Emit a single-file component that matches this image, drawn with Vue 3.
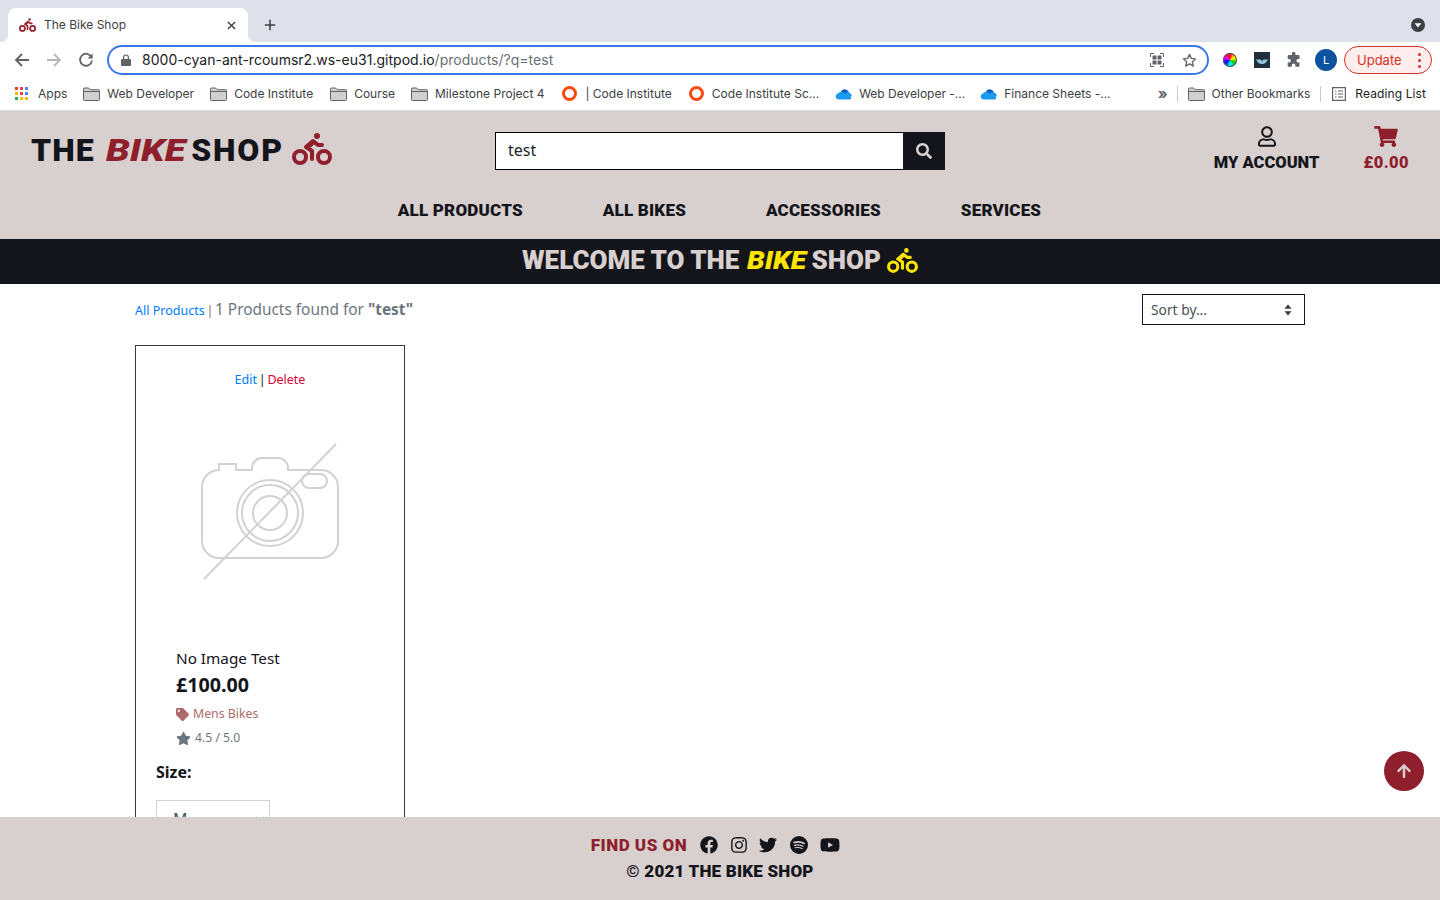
<script setup>
const bike = "M400 96a48 48 0 1 0-48-48 48 48 0 0 0 48 48zm-4 121a31.9 31.9 0 0 0 20 7h64a32 32 0 0 0 0-64h-52.78L356 103a31.94 31.94 0 0 0-40.81.68l-112 96a32 32 0 0 0 3.08 50.92L288 305.12V416a32 32 0 0 0 64 0V288a32 32 0 0 0-14.25-26.62l-41.36-27.57 58.25-49.92zm116 39a128 128 0 1 0 128 128 128 128 0 0 0-128-128zm0 192a64 64 0 1 1 64-64 64 64 0 0 1-64 64zM128 256a128 128 0 1 0 128 128 128 128 0 0 0-128-128zm0 192a64 64 0 1 1 64-64 64 64 0 0 1-64 64z"
const bookmarks = [
  { type: 'apps', label: 'Apps', cls: 'b-apps' },
  { type: 'folder', label: 'Web Developer', cls: 'b-web' },
  { type: 'folder', label: 'Code Institute', cls: 'b-ci' },
  { type: 'folder', label: 'Course', cls: 'b-course' },
  { type: 'folder', label: 'Milestone Project 4', cls: 'b-ms' },
  { type: 'ring', label: '| Code Institute', cls: 'b-ci2' },
  { type: 'ring', label: 'Code Institute Sc...', cls: 'b-sc' },
  { type: 'cloud', label: 'Web Developer -...', cls: 'b-wd' },
  { type: 'cloud', label: 'Finance Sheets -...', cls: 'b-fs' },
]
const navItems = ['ALL PRODUCTS', 'ALL BIKES', 'ACCESSORIES', 'SERVICES']
const appColors = ['#ea4335', '#ea4335', '#4285f4', '#fbbc04', '#ea4335', '#4285f4', '#34a853', '#fbbc04', '#fbbc04']
</script>

<template>
  <div class="screen">
    <div class="tabstrip">
      <div class="tab">
        <svg class="tab-ico" viewBox="0 0 640 512"><path :d="bike" /></svg>
        <span class="tab-title">The Bike Shop</span>
        <svg class="tab-x" viewBox="0 0 10 10"><path d="M1 1l8 8M9 1l-8 8" /></svg>
      </div>
      <svg class="tab-plus" viewBox="0 0 14 14"><path d="M7 1v12M1 7h12" /></svg>
      <div class="strip-spacer"></div>
      <div class="strip-menu"><svg viewBox="0 0 14 14"><circle cx="7" cy="7" r="7" fill="#3c4043" /><path d="M3.6 5.2h6.8L7 9.6z" fill="#fff" /></svg></div>
    </div>

    <div class="toolbar">
      <svg class="nav-ico first" viewBox="0 0 16 16"><path d="M15 8H2M8 2L2 8l6 6" stroke="#5f6368" /></svg>
      <svg class="nav-ico" viewBox="0 0 16 16"><path d="M1 8h13M8 2l6 6-6 6" stroke="#b4b7bb" /></svg>
      <svg class="nav-ico" viewBox="0 0 16 16"><path d="M13.4 5A6 6 0 1 0 14 8.500" stroke="#5f6368" /><path d="M14.600 1.500v5h-5z" fill="#5f6368" /></svg>
      <div class="omnibox">
        <svg class="lock" viewBox="0 0 10 12"><path d="M2 5V3.400a3 3 0 0 1 6 0V5h1a1 1 0 0 1 1 1v5a1 1 0 0 1-1 1H1a1 1 0 0 1-1-1V6a1 1 0 0 1 1-1zm1.200 0h3.600V3.400a1.800 1.800 0 0 0-3.600 0z" fill="#5f6368" /></svg>
        <span class="url"><span class="url-host">8000-cyan-ant-rcoumsr2.ws-eu31.gitpod.io</span>/products/?q=test</span>
        <svg class="qr" viewBox="0 0 14 14"><path d="M.5 4V.5H4M10 .5h3.500V4M13.500 10v3.500H10M4 13.500H.5V10" stroke="#5f6368" fill="none" /><rect x="2.500" y="2.500" width="4" height="4" rx=".6" fill="#5f6368" /><rect x="7.500" y="2.500" width="4" height="4" rx=".6" fill="#5f6368" /><rect x="2.500" y="7.500" width="4" height="4" rx=".6" fill="#5f6368" /><rect x="7.500" y="7.500" width="4" height="4" rx=".6" fill="#5f6368" /></svg>
        <svg class="star-o" viewBox="0 0 14 14"><path d="M7 1.300l1.700 3.700 4 .5-3 2.700.9 4L7 10.200l-3.600 2 .9-4-3-2.700 4-.5z" fill="none" stroke="#5f6368" stroke-width="1.200" stroke-linejoin="round" /></svg>
      </div>
      <div class="wheel"></div>
      <div class="ext-dark"><svg viewBox="0 0 16 16"><path d="M2 7c2 1 3 1 4 0 1 2 3 2 4 0 1 1 2 1 4 0-1 3-3 5-6 5S3 10 2 7z" fill="#8fc6d8" /></svg></div>
      <svg class="puzzle" viewBox="0 0 16 16"><path d="M6 1.500a1.700 1.700 0 0 1 3.400 0V3h3.100a1 1 0 0 1 1 1v3h-1.300a1.800 1.800 0 0 0 0 3.600h1.300v3.100a1 1 0 0 1-1 1H9.400v-1.300a1.800 1.800 0 0 0-3.600 0v1.300H2.700a1 1 0 0 1-1-1v-3.100H3a1.800 1.800 0 0 0 0-3.600H1.700V4a1 1 0 0 1 1-1H6z" fill="#5f6368" /></svg>
      <div class="avatar">L</div>
      <div class="update"><span>Update</span><i class="dots"><b></b><b></b><b></b></i></div>
    </div>

    <div class="bookmarks">
      <div v-for="b in bookmarks" :key="b.cls" class="bm" :class="b.cls">
        <span v-if="b.type === 'apps'" class="apps-grid"><i v-for="(c, i) in appColors" :key="i" :style="{ background: c }"></i></span>
        <svg v-else-if="b.type === 'folder'" class="folder" viewBox="0 0 17 14"><path d="M.5 2a1 1 0 0 1 1-1h4.200l1.500 1.700h8.300a1 1 0 0 1 1 1v8.800a1 1 0 0 1-1 1h-14a1 1 0 0 1-1-1z" fill="#d0d0d0" stroke="#5f6368" /><path d="M.5 4.500h16" stroke="#5f6368" /></svg>
        <span v-else-if="b.type === 'ring'" class="ring"></span>
        <svg v-else class="cloud" viewBox="0 0 17 12"><path d="M6 3.500a4.300 4.300 0 0 1 8 1.500 3 3 0 0 1 2.500 3.500H6z" fill="#0a5fc4" /><path d="M3.500 11.500a3 3 0 0 1-.6-5.900A4 4 0 0 1 10 6a2.500 2.500 0 0 1 5.500 2.500c1 1 .8 3-1 3z" fill="#1b9bef" /></svg>
        <span>{{ b.label }}</span>
      </div>
      <div class="bm-spacer"></div>
      <span class="chev">»</span>
      <i class="bm-sep sep-a"></i>
      <div class="bm b-other">
        <svg class="folder" viewBox="0 0 17 14"><path d="M.5 2a1 1 0 0 1 1-1h4.200l1.500 1.700h8.300a1 1 0 0 1 1 1v8.800a1 1 0 0 1-1 1h-14a1 1 0 0 1-1-1z" fill="#d0d0d0" stroke="#5f6368" /><path d="M.5 4.500h16" stroke="#5f6368" /></svg>
        <span>Other Bookmarks</span>
      </div>
      <i class="bm-sep sep-b"></i>
      <div class="bm b-read">
        <svg class="read" viewBox="0 0 14 14"><path d="M.6.6h12.800v12.800H.6z" fill="none" stroke="#5f6368" stroke-width="1.200" /><path d="M3 4h1.500M6 4h5M3 7h1.500M6 7h5M3 10h1.500M6 10h5" stroke="#5f6368" stroke-width="1.200" /></svg>
        <span class="read-t">Reading List</span>
      </div>
    </div>

    <header class="site-head">
      <div class="head-top">
        <div class="logo">
          <span class="word-the">THE</span>
          <em class="word-bike">BIKE</em>
          <span class="word-shop">SHOP</span>
          <svg class="logo-ico" viewBox="0 0 640 512"><path :d="bike" /></svg>
        </div>
        <div class="search">
          <div class="search-input">test</div>
          <div class="search-btn"><svg viewBox="0 0 512 512"><path d="M505 442.700L405.300 343c-4.500-4.500-10.600-7-17-7H372c27.600-35.300 44-79.700 44-128C416 93.100 322.900 0 208 0S0 93.100 0 208s93.100 208 208 208c48.300 0 92.700-16.400 128-44v16.300c0 6.400 2.500 12.500 7 17l99.700 99.700c9.400 9.400 24.600 9.400 33.900 0l28.300-28.300c9.400-9.400 9.400-24.600.1-34zM208 336c-70.700 0-128-57.200-128-128 0-70.700 57.200-128 128-128 70.700 0 128 57.200 128 128 0 70.700-57.200 128-128 128z" /></svg></div>
        </div>
        <div class="head-right">
          <div class="acct">
            <svg class="acct-ico" viewBox="0 0 448 512"><path d="M313.600 304c-28.700 0-42.500 16-89.600 16-47.100 0-60.800-16-89.600-16C60.200 304 0 364.200 0 438.400V464c0 26.500 21.500 48 48 48h352c26.500 0 48-21.500 48-48v-25.600c0-74.200-60.200-134.400-134.400-134.400zM400 464H48v-25.600c0-47.600 38.800-86.400 86.400-86.400 14.600 0 38.300 16 89.600 16 51.700 0 74.900-16 89.600-16 47.600 0 86.400 38.800 86.400 86.400V464zM224 288c79.500 0 144-64.500 144-144S303.500 0 224 0 80 64.500 80 144s64.500 144 144 144zm0-240c52.900 0 96 43.100 96 96s-43.100 96-96 96-96-43.100-96-96 43.100-96 96-96z" /></svg>
            <span>MY ACCOUNT</span>
          </div>
          <div class="cart">
            <svg class="cart-ico" viewBox="0 0 576 512"><path d="M528.120 301.319l47.273-208C578.806 78.301 567.391 64 551.990 64H159.208l-9.166-44.810C147.758 8.021 137.930 0 126.529 0H24C10.745 0 0 10.745 0 24v16c0 13.255 10.745 24 24 24h69.883l70.248 343.435C147.325 417.100 136 435.222 136 456c0 30.928 25.072 56 56 56s56-25.072 56-56c0-15.674-6.447-29.835-16.824-40h209.647C430.447 426.165 424 440.326 424 456c0 30.928 25.072 56 56 56s56-25.072 56-56c0-22.172-12.888-41.332-31.579-50.405l5.517-24.276c3.413-15.018-8.002-29.319-23.403-29.319H218.117l-6.545-32h293.145c11.206 0 20.920-7.754 23.403-18.681z" /></svg>
            <span>£0.00</span>
          </div>
        </div>
      </div>
      <nav class="nav"><a v-for="n in navItems" :key="n">{{ n }}</a></nav>
    </header>

    <div class="banner">
      <span class="ban-a">WELCOME TO THE</span>
      <em>BIKE</em>
      <span class="ban-b">SHOP</span>
      <svg viewBox="0 0 640 512"><path :d="bike" /></svg>
    </div>

    <main class="main">
      <div class="container">
        <div class="result-row">
          <div class="result-text">
            <a class="link small">All Products</a><span class="pipe"> | </span><span class="found">1 Products found for <b>"test"</b></span>
          </div>
          <div class="sort">
            <span>Sort by...</span>
            <svg viewBox="0 0 8 12"><path d="M4 .5L7.500 4.800H.5zM4 11.500L.5 7.200h7z" fill="#343a40" /></svg>
          </div>
        </div>

        <article class="card">
          <div class="admin"><a class="link">Edit</a> | <a class="del">Delete</a></div>
          <svg class="noimg" viewBox="0 0 268 250">
            <g fill="none" stroke="#d2d2d2" stroke-width="2">
              <path d="M116 70v-2a10 10 0 0 1 10-10h16a10 10 0 0 1 10 10v2h33a17 17 0 0 1 17 17v54a17 17 0 0 1-17 17H83a17 17 0 0 1-17-17V87a17 17 0 0 1 17-17h0v-6h17v6z" />
              <circle cx="134" cy="113" r="33" />
              <circle cx="134" cy="113" r="28" />
              <circle cx="134" cy="113" r="17" />
              <rect x="166" y="74" width="25" height="14" rx="7" />
              <path d="M200 44L68 179" />
            </g>
          </svg>
          <div class="info">
            <div class="p-name">No Image Test</div>
            <div class="p-price">£100.00</div>
            <div class="p-cat">
              <svg viewBox="0 0 512 512"><path d="M0 252.118V48C0 21.490 21.490 0 48 0h204.118a48 48 0 0 1 33.941 14.059l211.882 211.882c18.745 18.745 18.745 49.137 0 67.882L293.823 497.941c-18.745 18.745-49.137 18.745-67.882 0L14.059 286.059A48 48 0 0 1 0 252.118zM112 64c-26.510 0-48 21.490-48 48s21.490 48 48 48 48-21.490 48-48-21.490-48-48-48z" /></svg>
              <span>Mens Bikes</span>
            </div>
            <div class="p-rate">
              <svg viewBox="0 0 576 512"><path d="M259.300 17.800L194 150.200 47.900 171.500c-26.200 3.800-36.700 36.100-17.700 54.600l105.700 103-25 145.500c-4.500 26.300 23.200 46 46.400 33.700L288 439.600l130.700 68.700c23.200 12.200 50.900-7.400 46.400-33.700l-25-145.500 105.700-103c19-18.500 8.500-50.800-17.700-54.600L382 150.200 316.700 17.800c-11.700-23.600-45.600-23.900-57.400 0z" /></svg>
              <span>4.5 / 5.0</span>
            </div>
          </div>
          <div class="size-label">Size:</div>
          <div class="size-select">
            <span>M</span>
            <svg viewBox="0 0 10 6"><path d="M1 1l4 4 4-4" fill="none" stroke="#8a8f94" stroke-width="1.200" /></svg>
          </div>
        </article>
      </div>
    </main>

    <footer class="foot">
      <div class="foot-row">
        <span class="find">FIND US ON</span>
        <svg class="s-fb" viewBox="0 0 512 512"><path d="M504 256C504 119 393 8 256 8S8 119 8 256c0 123.780 90.690 226.380 209.250 245V327.690h-63V256h63v-54.640c0-62.150 37-96.480 93.670-96.480 27.140 0 55.520 4.840 55.520 4.840v61h-31.280c-30.800 0-40.410 19.120-40.410 38.730V256h68.780l-11 71.690h-57.780V501C413.310 482.380 504 379.780 504 256z" /></svg>
        <svg class="s-ig" viewBox="0 0 448 512"><path d="M224.100 141c-63.600 0-114.900 51.300-114.900 114.900s51.300 114.900 114.900 114.900S339 319.500 339 255.900 287.700 141 224.100 141zm0 189.600c-41.100 0-74.700-33.500-74.700-74.700s33.500-74.700 74.700-74.700 74.700 33.500 74.700 74.700-33.600 74.700-74.700 74.700zm146.400-194.300c0 14.900-12 26.800-26.800 26.800-14.900 0-26.800-12-26.800-26.800s12-26.800 26.800-26.800 26.800 12 26.800 26.800zm76.100 27.200c-1.700-35.900-9.900-67.700-36.200-93.900-26.200-26.200-58-34.400-93.900-36.200-37-2.100-147.900-2.100-184.900 0-35.800 1.700-67.600 9.900-93.900 36.100s-34.400 58-36.200 93.900c-2.100 37-2.100 147.900 0 184.900 1.700 35.900 9.900 67.700 36.200 93.900s58 34.400 93.900 36.200c37 2.100 147.900 2.100 184.900 0 35.900-1.700 67.700-9.900 93.900-36.200 26.200-26.200 34.400-58 36.200-93.900 2.100-37 2.100-147.800 0-184.800zM398.800 388c-7.800 19.600-22.900 34.700-42.600 42.600-29.500 11.700-99.500 9-132.100 9s-102.700 2.600-132.100-9c-19.600-7.800-34.700-22.900-42.600-42.600-11.700-29.500-9-99.500-9-132.100s-2.600-102.700 9-132.100c7.800-19.600 22.900-34.700 42.600-42.600 29.500-11.700 99.500-9 132.100-9s102.700-2.600 132.100 9c19.600 7.800 34.700 22.900 42.600 42.600 11.700 29.500 9 99.500 9 132.100s2.700 102.700-9 132.100z" /></svg>
        <svg class="s-tw" viewBox="0 0 512 512"><path d="M459.370 151.716c.325 4.548.325 9.097.325 13.645 0 138.720-105.583 298.558-298.558 298.558-59.452 0-114.680-17.219-161.137-47.106 8.447.974 16.568 1.299 25.340 1.299 49.055 0 94.213-16.568 130.274-44.832-46.132-.975-84.792-31.188-98.112-72.772 6.498.974 12.995 1.624 19.818 1.624 9.421 0 18.843-1.300 27.614-3.573-48.081-9.747-84.143-51.980-84.143-102.985v-1.299c13.969 7.797 30.214 12.670 47.431 13.319-28.264-18.843-46.781-51.005-46.781-87.391 0-19.492 5.197-37.360 14.294-52.954 51.655 63.675 129.300 105.258 216.365 109.807-1.624-7.797-2.599-15.918-2.599-24.040 0-57.828 46.782-104.934 104.934-104.934 30.213 0 57.502 12.670 76.670 33.137 23.715-4.548 46.456-13.320 66.599-25.340-7.798 24.366-24.366 44.833-46.132 57.827 21.117-2.273 41.584-8.122 60.426-16.243-14.292 20.791-32.161 39.308-52.628 54.253z" /></svg>
        <svg class="s-sp" viewBox="0 0 24 24"><circle cx="12" cy="12" r="12" fill="#14151a" /><g fill="none" stroke="#d8cfcf" stroke-linecap="round"><path d="M5.500 8.700c4.500-1.300 9.500-.9 13.300 1.200" stroke-width="2.200" /><path d="M6 12.400c3.800-1 8-.6 11.300 1.300" stroke-width="1.800" /><path d="M6.700 15.700c3.200-.8 6.500-.4 9.300 1.100" stroke-width="1.500" /></g></svg>
        <svg class="s-yt" viewBox="0 0 576 512"><path d="M549.655 124.083c-6.281-23.650-24.787-42.276-48.284-48.597C458.781 64 288 64 288 64S117.220 64 74.629 75.486c-23.497 6.322-42.003 24.947-48.284 48.597-11.412 42.867-11.412 132.305-11.412 132.305s0 89.438 11.412 132.305c6.281 23.650 24.787 41.500 48.284 47.821C117.220 448 288 448 288 448s170.780 0 213.371-11.486c23.497-6.321 42.003-24.171 48.284-47.821 11.412-42.867 11.412-132.305 11.412-132.305s0-89.438-11.412-132.305zm-317.510 213.508V175.185l142.739 81.205-142.739 81.201z" /></svg>
      </div>
      <div class="copy">© 2021 THE BIKE SHOP</div>
    </footer>

    <button class="to-top"><svg viewBox="0 0 448 512"><path d="M34.900 289.500l-22.200-22.200c-9.400-9.400-9.400-24.600 0-33.900L207 39c9.400-9.400 24.600-9.400 33.900 0l194.300 194.300c9.400 9.400 9.400 24.600 0 33.900L413 289.400c-9.500 9.500-25 9.300-34.300-.4L264 168.600V456c0 13.300-10.700 24-24 24h-32c-13.300 0-24-10.700-24-24V168.600L69.200 289.100c-9.300 9.800-24.800 10-34.300.4z" /></svg></button>
  </div>
</template>

<style scoped>
.screen { position: relative; width: 1440px; height: 900px; display: flex; flex-direction: column; overflow: hidden; background: #fff; font-family: "Noto Sans", sans-serif; }
svg { display: block; flex: none; }

.tabstrip { height: 42px; flex: none; background: #dee1e9; display: flex; align-items: flex-end; padding-left: 8px; }
.tab { position: relative; width: 240px; height: 34px; background: #fff; border-radius: 8px 8px 0 0; display: flex; align-items: center; padding: 0 11px; box-sizing: border-box; }
.tab::before, .tab::after { content: ""; position: absolute; bottom: 0; width: 8px; height: 8px; }
.tab::before { left: -8px; background: radial-gradient(circle at 0 0, transparent 8px, #fff 8.500px); }
.tab::after { right: -8px; background: radial-gradient(circle at 100% 0, transparent 8px, #fff 8.500px); }
.tab-ico { width: 17px; height: 14px; fill: #96202e; }
.tab-title { font: 12px Inter, sans-serif; color: #3c4043; margin: 0 0 2px 8px; flex: 1; }
.tab-x { width: 9px; height: 9px; stroke: #3c4043; stroke-width: 1.600; fill: none; margin-right: 1px; }
.tab-plus { width: 12px; height: 12px; stroke: #3c4043; stroke-width: 1.800; fill: none; margin: 0 0 11px 16px; }
.strip-spacer { flex: 1; }
.strip-menu { margin: 0 15px 10px 0; }
.strip-menu svg { width: 14px; height: 14px; }

.toolbar { height: 36px; flex: none; background: #fff; display: flex; align-items: center; }
.nav-ico { width: 16px; height: 16px; fill: none; stroke-width: 1.800; margin-right: 16px; }
.nav-ico.first { margin-left: 14px; }
.omnibox { width: 1102px; height: 30px; box-sizing: border-box; border: 2px solid #3a78e7; border-radius: 15px; margin-left: -3px; display: flex; align-items: center; padding: 0 10px 0 12px; }
.lock { width: 10px; height: 12px; }
.url { font: 14px Inter, sans-serif; color: #6a6e73; margin: 0 0 1px 11px; flex: 1; white-space: nowrap; letter-spacing: .02px; }
.url-host { color: #202124; }
.qr { width: 14px; height: 14px; margin-right: 18px; }
.star-o { width: 15px; height: 15px; }
.wheel { width: 14px; height: 14px; margin-left: 14px; border-radius: 50%; background: conic-gradient(#f00, #ff0, #0c0, #0ff, #00f, #f0f, #f00); box-shadow: 0 0 0 1px #555 inset; }
.ext-dark { width: 16px; height: 16px; margin-left: 17px; background: #232f3e; }
.ext-dark svg { width: 16px; height: 16px; }
.puzzle { width: 16px; height: 16px; margin-left: 16px; }
.avatar { width: 22px; height: 22px; margin-left: 13px; border-radius: 50%; background: #0b539f; color: #fff; font: 11px/22px Inter, sans-serif; text-align: center; }
.update { width: 88px; height: 28px; margin-left: 7px; box-sizing: border-box; border: 1px solid #d93025; border-radius: 14px; background: #fdeeed; display: flex; align-items: center; justify-content: space-between; padding: 0 10px 0 12px; color: #d93025; font: 13px Inter, sans-serif; }
.dots { display: flex; flex-direction: column; gap: 3px; }
.dots b { width: 3px; height: 3px; border-radius: 50%; background: #d93025; }

.bookmarks { height: 33px; flex: none; background: #fff; border-bottom: 1px solid #d9dadc; box-sizing: border-box; display: flex; align-items: center; padding: 0 0 1px 15px; font: 12px Inter, sans-serif; color: #3c4043; white-space: nowrap; }
.bm { display: flex; align-items: center; }
.apps-grid { width: 13px; height: 13px; display: grid; grid-template-columns: repeat(3, 3px); gap: 2px; }
.apps-grid i { width: 3px; height: 3px; }
.folder { width: 17px; height: 14px; }
.ring { width: 15px; height: 15px; box-sizing: border-box; border: 3px solid #fc4a0e; border-radius: 50%; }
.cloud { width: 17px; height: 12px; }
.b-apps span:last-child { margin-left: 10px; }
.b-web, .b-ci, .b-course, .b-ms { gap: 7px; }
.b-web { margin-left: 16px; }
.b-ci { margin-left: 16px; }
.b-course { margin-left: 17px; }
.b-ms { margin-left: 16px; }
.b-ci2 { margin-left: 18px; gap: 8px; }
.b-sc { margin-left: 17px; gap: 8px; }
.b-wd { margin-left: 16px; gap: 7px; }
.b-fs { margin-left: 15px; gap: 7px; }
.bm-spacer { flex: 1; }
.chev { font-size: 15px; font-weight: 700; margin-right: 9px; color: #5f6368; }
.bm-sep { width: 1px; height: 16px; background: #c8cacc; }
.b-other { margin-left: 10px; gap: 7px; }
.sep-b { margin-left: 10px; }
.b-read { margin-left: 11px; margin-right: 14px; gap: 9px; }
.read { width: 14px; height: 14px; }
.read-t { color: #202124; letter-spacing: .1px; }

.site-head { height: 128px; flex: none; background: #d8cfcf; box-sizing: border-box; padding-top: 15px; }
.head-top { display: grid; grid-template-columns: 1fr 450px 1fr; }
.logo { padding: 8px 0 0 31px; display: flex; align-items: flex-start; font: 900 32px/32px Roboto, sans-serif; color: #14151a; }
.word-the { letter-spacing: 1px; }
.word-bike { color: #8f1f2d; margin: 0 19px 0 11px; transform: scaleX(1.19); transform-origin: left; }
.word-shop { letter-spacing: 1.800px; }
.logo-ico { width: 40px; height: 32px; fill: #8f1f2d; margin: -1px 0 0 8px; }
.search { display: flex; height: 38px; margin-top: 6px; }
.search-input { flex: 1; box-sizing: border-box; background: #fff; border: 1.500px solid #000; border-right: 0; padding-left: 12px; font-size: 16px; line-height: 35px; color: #212529; }
.search-btn { width: 42px; background: #14151a; display: flex; align-items: center; justify-content: center; }
.search-btn svg { width: 16px; height: 16px; fill: #d8cfcf; }
.head-right { display: flex; justify-content: flex-end; padding-right: 31px; font: 900 16.500px/20px Roboto, sans-serif; text-align: center; }
.acct { display: flex; flex-direction: column; align-items: center; color: #14151a; }
.acct-ico { width: 18px; height: 21px; fill: #14151a; }
.cart { margin-left: 44px; display: flex; flex-direction: column; align-items: center; color: #8f1f2d; letter-spacing: .4px; }
.cart-ico { width: 24px; height: 21px; fill: #8f1f2d; }
.acct span, .cart span { margin-top: 6px; }
.nav { display: flex; justify-content: center; gap: 80px; margin-top: 27px; padding-right: 1px; font: 900 17px/20px Roboto, sans-serif; color: #14151a; letter-spacing: .2px; }

.banner { height: 45px; flex: none; background: #14151a; color: #d8cfcf; display: flex; align-items: center; justify-content: center; font: 900 26px/41px Roboto, sans-serif; box-sizing: border-box; padding-bottom: 3px; }
.banner em { color: #ffe600; margin: 0 10px 0 8px; transform: scaleX(1.09); transform-origin: left; }
.banner svg { width: 31px; height: 25px; fill: #ffe600; margin-left: 6px; }

.main { flex: 1; min-height: 0; overflow: hidden; }
.container { width: 1170px; margin: 0 auto; }
.result-row { display: flex; justify-content: space-between; padding-top: 10px; height: 61px; box-sizing: border-box; }
.result-text { line-height: 31px; }
.link { color: #007bff; }
.small { font-size: 12.500px; }
.pipe { font-size: 12.500px; color: #6c757d; word-spacing: -1.500px; }
.found { font-size: 15.400px; color: #6c757d; }
.sort { width: 163px; height: 31px; box-sizing: border-box; border: 1.500px solid #14151a; display: flex; align-items: center; justify-content: space-between; padding: 0 12px 0 8px; font-size: 13.800px; color: #495057; }
.sort svg { width: 8px; height: 12px; }
.card { width: 270px; box-sizing: border-box; border: 1px solid #343a40; padding-top: 24px; }
.admin { text-align: center; font-size: 12.500px; line-height: 20px; height: 30px; color: #212529; word-spacing: -1.500px; }
.del { color: #dc0035; }
.noimg { width: 268px; height: 250px; }
.info { padding: 0 0 0 40px; }
.p-name { font-size: 15.300px; line-height: 24px; color: #14151a; margin-top: -4px; }
.p-price { font-size: 19.700px; font-weight: 700; line-height: 30px; color: #14151a; }
.p-cat { display: flex; align-items: center; font-size: 12.300px; line-height: 20px; margin-top: 4px; color: #ad6a6c; }
.p-cat svg { width: 13px; height: 13px; fill: #ad6a6c; margin-right: 4px; }
.p-rate { display: flex; align-items: center; font-size: 12.200px; line-height: 20px; margin-top: 4px; color: #6c757d; }
.p-rate svg { width: 15px; height: 13px; fill: #6c757d; margin-right: 4px; }
.size-label { margin: 12px 0 0 20px; font-size: 16px; font-weight: 700; line-height: 24px; color: #14151a; }
.size-select { width: 114px; height: 38px; box-sizing: border-box; margin: 16px 0 0 20px; border: 1px solid #ced4da; display: flex; align-items: center; justify-content: space-between; padding: 0 4px 0 16px; font-size: 16px; color: #495057; }
.size-select svg { width: 10px; height: 6px; }

.foot { height: 83px; flex: none; background: #d8cfcf; display: flex; flex-direction: column; align-items: center; padding-top: 18px; box-sizing: border-box; font: 900 17px/20px Roboto, sans-serif; color: #14151a; }
.foot-row { display: flex; align-items: center; height: 20px; padding-right: 9px; }
.find { color: #8f1f2d; margin-right: 13px; letter-spacing: .5px; }
.foot-row svg { fill: #14151a; }
.s-fb { width: 18px; height: 18px; }
.s-ig { width: 16px; height: 18px; margin-left: 13px; }
.s-tw { width: 18px; height: 18px; margin-left: 12px; }
.s-sp { width: 18px; height: 18px; margin-left: 13px; }
.s-yt { width: 20px; height: 18px; margin-left: 12px; }
.copy { margin-top: 6px; letter-spacing: .2px; }

.to-top { position: absolute; left: 1384px; top: 751px; width: 40px; height: 40px; border: 0; padding: 0; border-radius: 50%; background: #8f1f2d; display: flex; align-items: center; justify-content: center; }
.to-top svg { width: 14px; height: 16px; fill: #d8cfcf; }
</style>
